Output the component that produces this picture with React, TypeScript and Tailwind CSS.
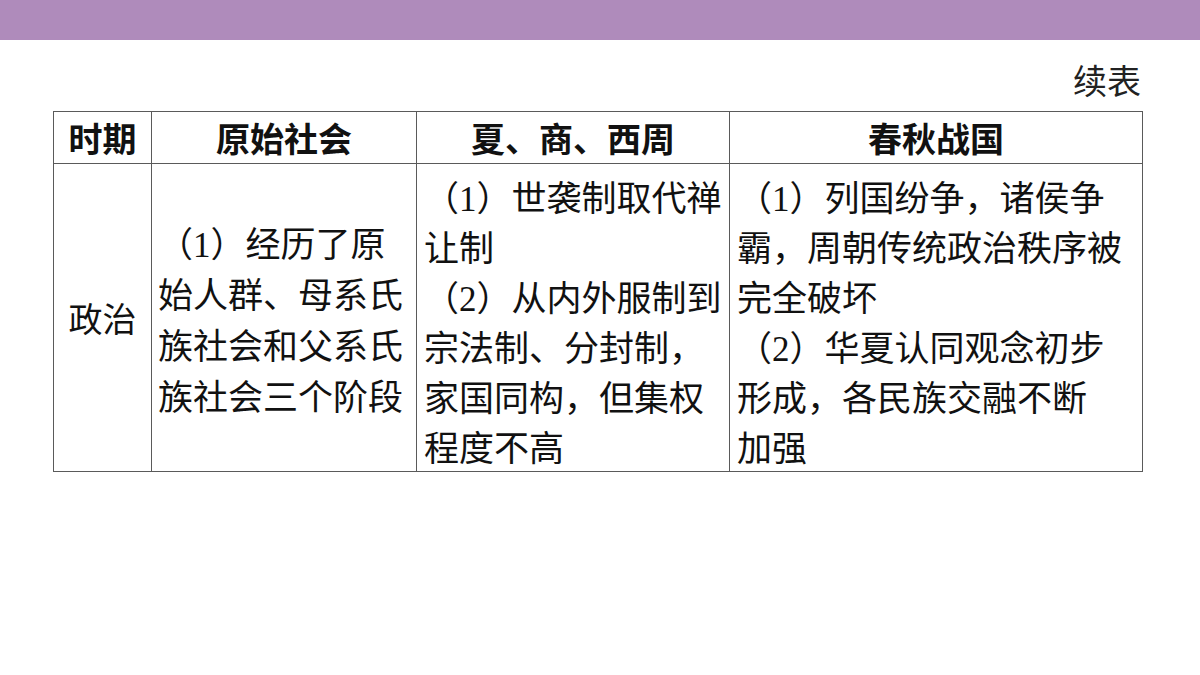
const cjk = "font-['Noto_Sans_CJK_SC','Noto_Sans_CJK_JP',sans-serif]";

// （1）numbering: digits in a serif face, parens fall back to CJK
function Num({ n }: { n: string }) {
  return <span className="font-['Liberation_Serif','Noto_Sans_CJK_SC',serif] leading-[0]">（{n}）</span>;
}

function Lines({ lines }: { lines: React.ReactNode[] }) {
  return (
    <>
      {lines.map((l, i) => (
        <div key={i} className="whitespace-nowrap">
          {l}
        </div>
      ))}
    </>
  );
}

export default function App() {
  return (
    <div className={`w-[1200px] h-[675px] bg-white text-[#111] overflow-hidden ${cjk}`}>
      <div className="h-[40px] bg-[#af8bbb]" />

      <div className="mt-[20px] h-[40px] leading-[40px] pr-[59px] text-right text-[34px] text-[#222]">续表</div>

      <table className="mt-[11px] ml-[53px] table-fixed border-collapse">
        <colgroup>
          <col className="w-[98px]" />
          <col className="w-[265px]" />
          <col className="w-[313px]" />
          <col className="w-[413px]" />
        </colgroup>
        <thead>
          <tr className="h-[52px]">
            {['时期', '原始社会', '夏、商、西周', '春秋战国'].map((h) => (
              <th key={h} className="border border-[#5a5a5a] p-0 text-center text-[34px] font-bold leading-[50px]">
                {h}
              </th>
            ))}
          </tr>
        </thead>
        <tbody>
          <tr className="h-[307px]">
            <td className="border border-[#5a5a5a] p-0 text-center align-middle text-[34px] leading-[50px]">政治</td>
            <td className="border border-[#5a5a5a] px-[6px] align-middle text-[35px] leading-[51px]">
              <Lines
                lines={[
                  <><Num n="1" />经历了原</>,
                  '始人群、母系氏',
                  '族社会和父系氏',
                  '族社会三个阶段',
                ]}
              />
            </td>
            <td className="border border-[#5a5a5a] px-[7px] pt-[7px] align-top text-[35px] leading-[50px]">
              <Lines
                lines={[
                  <><Num n="1" />世袭制取代禅</>,
                  '让制',
                  <><Num n="2" />从内外服制到</>,
                  '宗法制、分封制，',
                  '家国同构，但集权',
                  '程度不高',
                ]}
              />
            </td>
            <td className="border border-[#5a5a5a] px-[7px] pt-[7px] align-top text-[35px] leading-[50px]">
              <Lines
                lines={[
                  <><Num n="1" />列国纷争，诸侯争</>,
                  '霸，周朝传统政治秩序被',
                  '完全破坏',
                  <><Num n="2" />华夏认同观念初步</>,
                  '形成，各民族交融不断',
                  '加强',
                ]}
              />
            </td>
          </tr>
        </tbody>
      </table>
    </div>
  );
}
